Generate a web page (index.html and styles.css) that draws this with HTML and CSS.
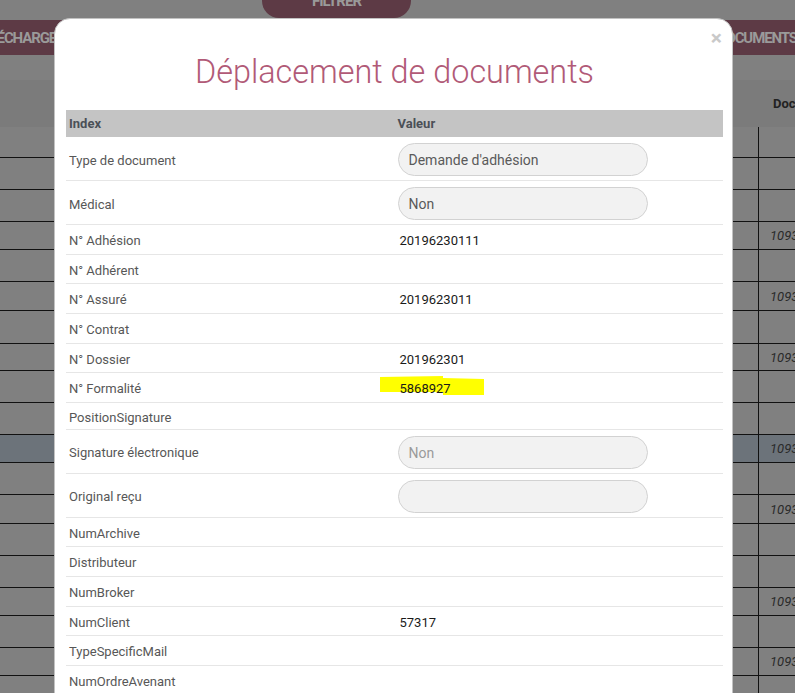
FILE: index.html
```html
<!DOCTYPE html>
<html lang="fr">
<head>
<meta charset="utf-8">
<title>Déplacement de documents</title>
<link rel="stylesheet" href="styles.css">
</head>
<body>
<div class="page">
  <div class="topbar"><span class="filter">FILTRER</span></div>
  <div class="toolbar">
    <span class="tbtn tbtn-left">TÉLÉCHARGER</span>
    <span class="tbtn tbtn-right">DOCUMENTS</span>
  </div>
  <div class="spacer"></div>
  <div class="bgtable">
    <div class="bghead"><span class="c1"></span><span class="c2">Doc</span></div>
    <div class="bgrow h31"><span class="c1"></span><span class="c2"></span></div>
    <div class="bgrow h32"><span class="c1"></span><span class="c2"></span></div>
    <div class="bgrow h32"><span class="c1"></span><span class="c2"></span></div>
    <div class="bgrow h28"><span class="c1"></span><span class="c2">10931</span></div>
    <div class="bgrow h32"><span class="c1"></span><span class="c2"></span></div>
    <div class="bgrow h29"><span class="c1"></span><span class="c2">10931</span></div>
    <div class="bgrow h33"><span class="c1"></span><span class="c2"></span></div>
    <div class="bgrow h27"><span class="c1"></span><span class="c2">10931</span></div>
    <div class="bgrow h32"><span class="c1"></span><span class="c2"></span></div>
    <div class="bgrow h32"><span class="c1"></span><span class="c2"></span></div>
    <div class="bgrow h28 selected"><span class="c1"></span><span class="c2">10931</span></div>
    <div class="bgrow h32"><span class="c1"></span><span class="c2"></span></div>
    <div class="bgrow h29"><span class="c1"></span><span class="c2">10931</span></div>
    <div class="bgrow h32"><span class="c1"></span><span class="c2"></span></div>
    <div class="bgrow h32"><span class="c1"></span><span class="c2"></span></div>
    <div class="bgrow h28"><span class="c1"></span><span class="c2">10931</span></div>
    <div class="bgrow h32"><span class="c1"></span><span class="c2"></span></div>
    <div class="bgrow h28"><span class="c1"></span><span class="c2">10931</span></div>
    <div class="bgrow h32"><span class="c1"></span><span class="c2"></span></div>
  </div>
</div>

<div class="modal">
  <span class="close">×</span>
  <h1 class="title">Déplacement de documents</h1>
  <table class="idx">
    <thead>
      <tr><th>Index</th><th>Valeur</th></tr>
    </thead>
    <tbody>
      <tr class="field"><td>Type de document</td><td><div class="pill">Demande d'adhésion</div></td></tr>
      <tr class="field"><td>Médical</td><td><div class="pill">Non</div></td></tr>
      <tr><td>N° Adhésion</td><td class="val">20196230111</td></tr>
      <tr><td>N° Adhérent</td><td class="val"></td></tr>
      <tr><td>N° Assuré</td><td class="val">2019623011</td></tr>
      <tr><td>N° Contrat</td><td class="val"></td></tr>
      <tr><td>N° Dossier</td><td class="val">201962301</td></tr>
      <tr><td>N° Formalité</td><td class="val marked"><svg class="marker" width="105" height="21" viewBox="0 0 105 21"><polygon points="0,2 63,1 63,3 104,4 104,20 63,20 63,17 0,17" fill="#ffff00"/></svg><span class="val-text">5868927</span></td></tr>
      <tr class="short"><td>PositionSignature</td><td class="val"></td></tr>
      <tr class="field"><td>Signature électronique</td><td><div class="pill pill-disabled">Non</div></td></tr>
      <tr class="field"><td>Original reçu</td><td><div class="pill"></div></td></tr>
      <tr><td>NumArchive</td><td class="val"></td></tr>
      <tr><td>Distributeur</td><td class="val"></td></tr>
      <tr><td>NumBroker</td><td class="val"></td></tr>
      <tr><td>NumClient</td><td class="val">57317</td></tr>
      <tr><td>TypeSpecificMail</td><td class="val"></td></tr>
      <tr><td>NumOrdreAvenant</td><td class="val"></td></tr>
      <tr><td>NumPolice</td><td class="val"></td></tr>
    </tbody>
  </table>
</div>
</body>
</html>
```
FILE: styles.css
```css
* { box-sizing: border-box; }
html, body { margin: 0; padding: 0; }
body {
  width: 795px;
  height: 693px;
  overflow: hidden;
  position: relative;
  background: #808080;
  font-family: Roboto, "Liberation Sans", Arial, sans-serif;
}

/* ---------- page behind the backdrop ---------- */
.topbar {
  height: 20px;
  display: flex;
}
.filter {
  margin-left: 262px;
  margin-top: -16px;
  width: 149px;
  height: 34px;
  background: #5d3a45;
  border-radius: 17px;
  color: #9a9a9a;
  font-weight: 700;
  font-size: 15px;
  letter-spacing: -1px;
  text-align: center;
  line-height: 34px;
}
.toolbar {
  display: flex;
  width: 800px;
  height: 35px;
}
.tbtn {
  flex: none;
  background: #5d3a45;
  color: #9a9a9a;
  font-weight: 700;
  font-size: 15px;
  letter-spacing: -1.1px;
  line-height: 36px;
  white-space: nowrap;
}
.tbtn-left {
  margin-left: -26px;
  width: 200px;
}
.tbtn-right {
  margin-left: auto;
  width: 110px;
  text-align: right;
  padding-right: 3px;
}
.spacer { height: 25px; }

.bgtable { width: 795px; }
.bghead {
  display: flex;
  height: 47px;
  background: #7b7b7b;
}
.bghead .c1 { flex: none; width: 758px; }
.bghead .c2 {
  flex: none;
  padding-left: 15px;
  font-weight: 700;
  font-size: 13px;
  color: #222;
  line-height: 47px;
  white-space: nowrap;
}
.bgrow {
  display: flex;
  border-bottom: 1px solid #111;
}
.bgrow .c1 { flex: none; width: 758px; }
.bgrow .c2 {
  flex: none;
  width: 37px;
  border-left: 1px solid #111;
  padding-left: 11px;
  display: flex;
  align-items: center;
  font-style: italic;
  font-size: 13px;
  color: #2a2a2a;
  white-space: nowrap;
}
.bgrow.selected { background: #6c737a; }
.h27 { height: 27px; }
.h28 { height: 28px; }
.h29 { height: 29px; }
.h31 { height: 31px; }
.h32 { height: 32px; }
.h33 { height: 33px; }

/* ---------- modal ---------- */
.modal {
  position: absolute;
  left: 54px;
  top: 18px;
  width: 679px;
  height: 720px;
  background: #fff;
  border: 1px solid #c2c2c2;
  border-radius: 16px;
  padding: 0 9px 0 11px;
}
.close {
  position: absolute;
  right: 10px;
  top: 9px;
  font-size: 21px;
  line-height: 20px;
  font-weight: 700;
  color: #c9c9c9;
}
.title {
  margin: 33px 0 18px;
  font-size: 32.4px;
  line-height: 40px;
  font-weight: 300;
  color: #b15a77;
  text-align: center;
}
.idx {
  width: 657px;
  border-collapse: collapse;
  table-layout: fixed;
  font-size: 13px;
}
.idx th {
  width: 50%;
  background: #c4c4c4;
  color: #4b5057;
  font-weight: 700;
  text-align: left;
  padding: 5px 3px 4px;
  line-height: 18px;
  height: 27px;
}
.idx thead tr { height: 27px; }
.idx td {
  padding: 7px 3px 4px;
  line-height: 17.67px;
  border-bottom: 1px solid #e6e6e6;
  color: #575757;
  vertical-align: middle;
}
.idx tr.field td {
  padding: 6px 3px 4px;
}
.idx tr.field td:first-child {
  padding-top: 8px;
  padding-bottom: 4px;
}
.idx tr.short td {
  padding-top: 5.5px;
  padding-bottom: 2.5px;
}
.idx td.val {
  color: #1a1a1a;
  padding-left: 5px;
}
.pill {
  width: 250px;
  height: 33px;
  border: 1px solid #d2d2d2;
  border-radius: 17px;
  background: #f2f2f2;
  padding-left: 10px;
  font-size: 14px;
  line-height: 32px;
  color: #5a5a5a;
}
.pill-disabled { color: #9a9a9a; }

.marked { position: relative; }
.marker {
  position: absolute;
  left: -15px;
  top: 2px;
}
.val-text { position: relative; }
```
